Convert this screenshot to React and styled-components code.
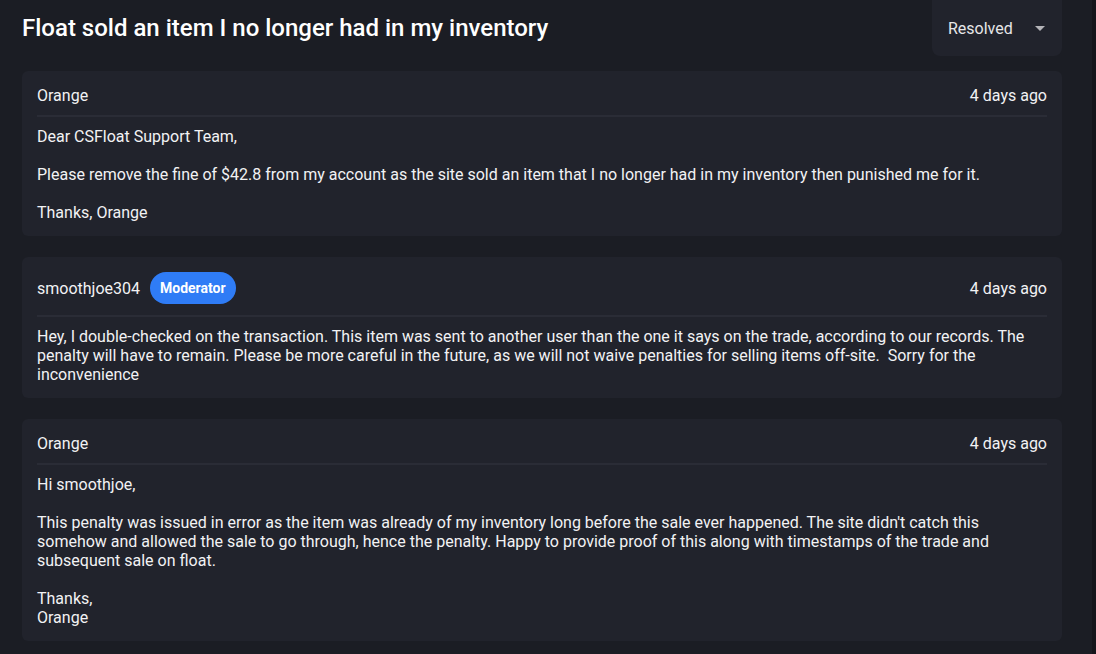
import React from "react";
import styled, { createGlobalStyle } from "styled-components";

const GlobalStyle = createGlobalStyle`
    html, body {
        margin: 0;
        padding: 0;
        background: #1b1d24;
    }
    body {
        font-family: Roboto, "Liberation Sans", sans-serif;
        color: #f2f2f4;
    }
`;

const messages = [
    {
        author: "Orange",
        time: "4 days ago",
        text: "Dear CSFloat Support Team,\n\nPlease remove the fine of $42.8 from my account as the site sold an item that I no longer had in my inventory then punished me for it.\n\nThanks, Orange",
    },
    {
        author: "smoothjoe304",
        moderator: true,
        time: "4 days ago",
        text: "Hey, I double-checked on the transaction. This item was sent to another user than the one it says on the trade, according to our records. The penalty will have to remain. Please be more careful in the future, as we will not waive penalties for selling items off-site.  Sorry for the inconvenience",
    },
    {
        author: "Orange",
        time: "4 days ago",
        text: "Hi smoothjoe,\n\nThis penalty was issued in error as the item was already of my inventory long before the sale ever happened. The site didn't catch this somehow and allowed the sale to go through, hence the penalty. Happy to provide proof of this along with timestamps of the trade and subsequent sale on float.\n\nThanks,\nOrange",
    },
];

const App = () => {
    return (
        <>
            <GlobalStyle />
            <Page>
                <TopBar>
                    <Title>Float sold an item I no longer had in my inventory</Title>
                    <StatusSelect>
                        <span>Resolved</span>
                        <Caret viewBox="0 0 10 5">
                            <path d="M0 0 L10 0 L5 5 Z" />
                        </Caret>
                    </StatusSelect>
                </TopBar>
                <Thread>
                    {messages.map((m, i) => (
                        <Card key={i}>
                            <CardHeader>
                                <Author>
                                    {m.author}
                                    {m.moderator && <Badge>Moderator</Badge>}
                                </Author>
                                <Time>{m.time}</Time>
                            </CardHeader>
                            <Body>{m.text}</Body>
                        </Card>
                    ))}
                </Thread>
            </Page>
        </>
    );
};

const Page = styled.div`
    min-height: 654px;
    box-sizing: border-box;
    padding: 0 30px 0 22px;
    border-right: 4px solid #15161b;
`;
const TopBar = styled.div`
    display: flex;
    align-items: center;
    justify-content: space-between;
    height: 56px;
`;
const Title = styled.h1`
    margin: 0;
    font-size: 24px;
    font-weight: 500;
    color: #ffffff;
`;
const StatusSelect = styled.div`
    display: flex;
    align-items: center;
    justify-content: space-between;
    box-sizing: border-box;
    width: 130px;
    height: 56px;
    padding: 0 17px 0 16px;
    background: #21232c;
    border-radius: 0 0 8px 8px;
    font-size: 16px;
    color: #e6e6e8;
`;
const Caret = styled.svg`
    width: 10px;
    height: 5px;
    fill: #b4b4b8;
`;
const Thread = styled.div`
    display: flex;
    flex-direction: column;
    gap: 21px;
    padding-top: 15px;
`;
const Card = styled.div`
    background: #21232c;
    border-radius: 6px;
    padding: 15px 15px 14px;
`;
const CardHeader = styled.div`
    display: flex;
    align-items: center;
    justify-content: space-between;
    padding-bottom: 10px;
    border-bottom: 2px solid #2a2c36;
    font-size: 16px;
`;
const Author = styled.div`
    display: flex;
    align-items: center;
    gap: 10px;
`;
const Badge = styled.span`
    display: inline-flex;
    align-items: center;
    height: 32px;
    margin-bottom: 1px;
    padding: 0 10px;
    border-radius: 16px;
    background: #2f7cf6;
    color: #ffffff;
    font-size: 14px;
    font-weight: 700;
`;
const Time = styled.div`
    color: #f2f2f4;
`;
const Body = styled.div`
    padding-top: 10px;
    font-size: 16px;
    line-height: 19px;
    white-space: pre-wrap;
`;

export default App;
